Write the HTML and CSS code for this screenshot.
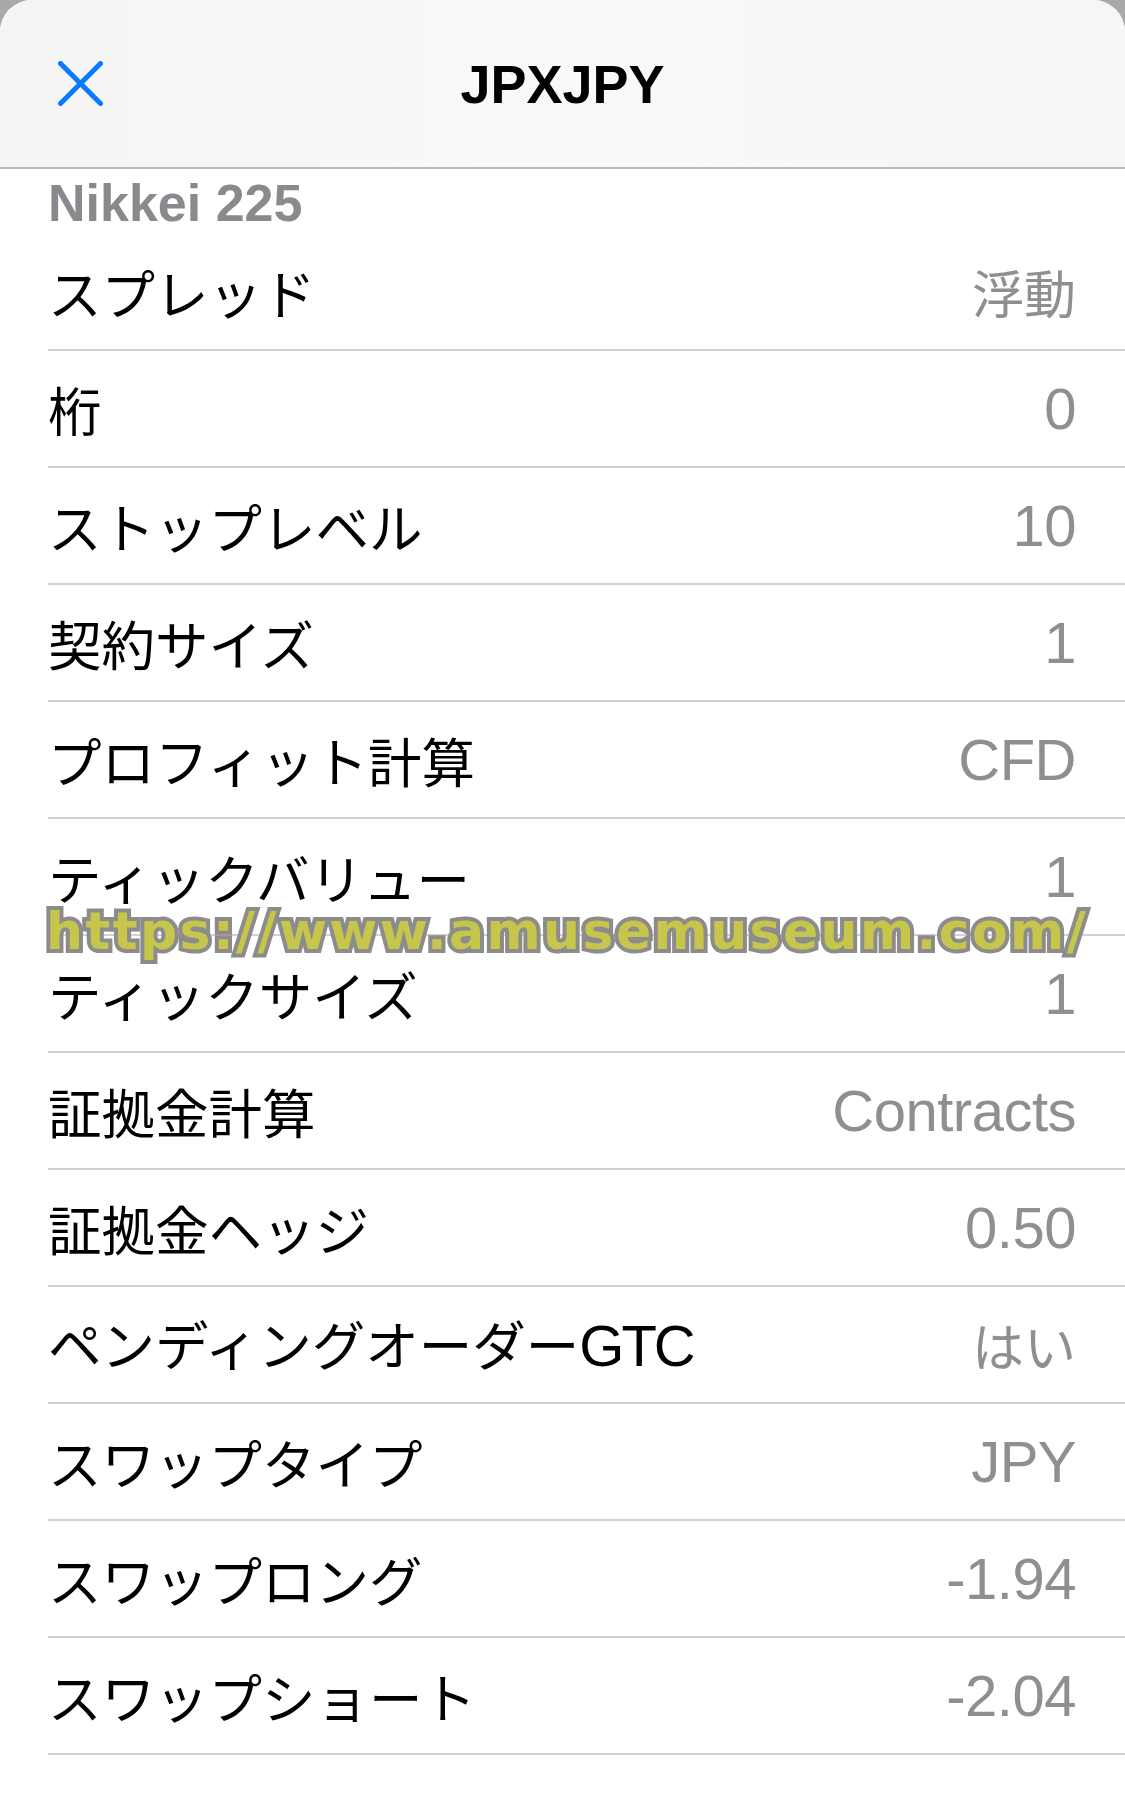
FILE: index.html
```html
<!DOCTYPE html>
<html lang="ja">
<head>
<meta charset="utf-8">
<title>JPXJPY</title>
<link rel="stylesheet" href="styles.css">
</head>
<body>
<div class="sheet">
  <header class="header">
    <div class="close">
      <svg width="45" height="45" viewBox="0 0 45 45" aria-hidden="true">
        <path d="M2.5 2.5 L42.5 42.5 M42.5 2.5 L2.5 42.5" stroke="#0a7aff" stroke-width="5" stroke-linecap="round" fill="none"/>
      </svg>
    </div>
    <h1 class="title">JPXJPY</h1>
    <div class="spacer"></div>
  </header>
  <div class="subtitle">Nikkei 225</div>
  <ul class="list">
    <li class="row"><span class="label">スプレッド</span><span class="value jp">浮動</span></li>
    <li class="row"><span class="label">桁</span><span class="value">0</span></li>
    <li class="row"><span class="label">ストップレベル</span><span class="value">10</span></li>
    <li class="row"><span class="label">契約サイズ</span><span class="value">1</span></li>
    <li class="row"><span class="label">プロフィット計算</span><span class="value">CFD</span></li>
    <li class="row"><span class="label">ティックバリュー</span><span class="value">1</span></li>
    <li class="row"><span class="label">ティックサイズ</span><span class="value">1</span></li>
    <li class="row"><span class="label">証拠金計算</span><span class="value">Contracts</span></li>
    <li class="row"><span class="label">証拠金ヘッジ</span><span class="value">0.50</span></li>
    <li class="row"><span class="label">ペンディングオーダー<span class="lat">GTC</span></span><span class="value jp">はい</span></li>
    <li class="row"><span class="label">スワップタイプ</span><span class="value">JPY</span></li>
    <li class="row"><span class="label">スワップロング</span><span class="value">-1.94</span></li>
    <li class="row"><span class="label">スワップショート</span><span class="value">-2.04</span></li>
  </ul>
  <div class="watermark">https://www.amusemuseum.com/</div>
</div>
</body>
</html>
```

FILE: styles.css
```css
html, body {
  margin: 0;
  padding: 0;
}
body {
  background: #a9a9a9;
  width: 1125px;
  height: 1798px;
  overflow: hidden;
}
.sheet {
  position: relative;
  background: #ffffff;
  border-radius: 32px 32px 0 0;
  height: 1798px;
  overflow: hidden;
}
.header {
  height: 167px;
  border-bottom: 2px solid #b9b9bb;
  background: linear-gradient(90deg, #f5f5f5 0%, #f9f9f9 50%, #f7f6f6 100%);
  display: grid;
  grid-template-columns: 1fr auto 1fr;
  align-items: center;
}
.close {
  padding-left: 58px;
  display: flex;
  align-items: center;
}
.close svg {
  display: block;
}
.title {
  margin: 0;
  font-family: "Liberation Sans", Arial, sans-serif;
  font-weight: 700;
  font-size: 54px;
  line-height: 54px;
  color: #000;
  padding-top: 1px;
}
.subtitle {
  height: 62px;
  padding-top: 3px;
  margin-left: 48px;
  font-family: "Liberation Sans", Arial, sans-serif;
  font-weight: 700;
  font-size: 52px;
  line-height: 62px;
  color: #8a8a8e;
}
.list {
  list-style: none;
  margin: 0;
  padding: 0;
}
.row {
  height: 115px;
  margin-left: 48px;
  padding-right: 49px;
  border-bottom: 2px solid #d2d2d4;
  display: flex;
  align-items: center;
  justify-content: space-between;
}
.label {
  font-family: "Noto Sans CJK JP", sans-serif;
  font-size: 53.5px;
  line-height: 54px;
  color: #000;
  white-space: nowrap;
}
.lat {
  font-family: "Liberation Sans", Arial, sans-serif;
  font-size: 58px;
  letter-spacing: -3px;
}
.value {
  font-family: "Liberation Sans", Arial, sans-serif;
  font-size: 58px;
  line-height: 58px;
  letter-spacing: -0.5px;
  color: #8e8e93;
  white-space: nowrap;
}
.value.jp {
  font-family: "Noto Sans CJK JP", sans-serif;
  font-size: 52px;
  line-height: 52px;
  letter-spacing: 0;
}
.watermark {
  position: absolute;
  left: 46px;
  top: 905px;
  font-family: "DejaVu Sans", sans-serif;
  font-weight: 700;
  font-size: 52px;
  line-height: 52px;
  letter-spacing: 2.4px;
  color: #c6c64c;
  -webkit-text-stroke: 8px #8c8c8c;
  paint-order: stroke fill;
  white-space: nowrap;
}
```
